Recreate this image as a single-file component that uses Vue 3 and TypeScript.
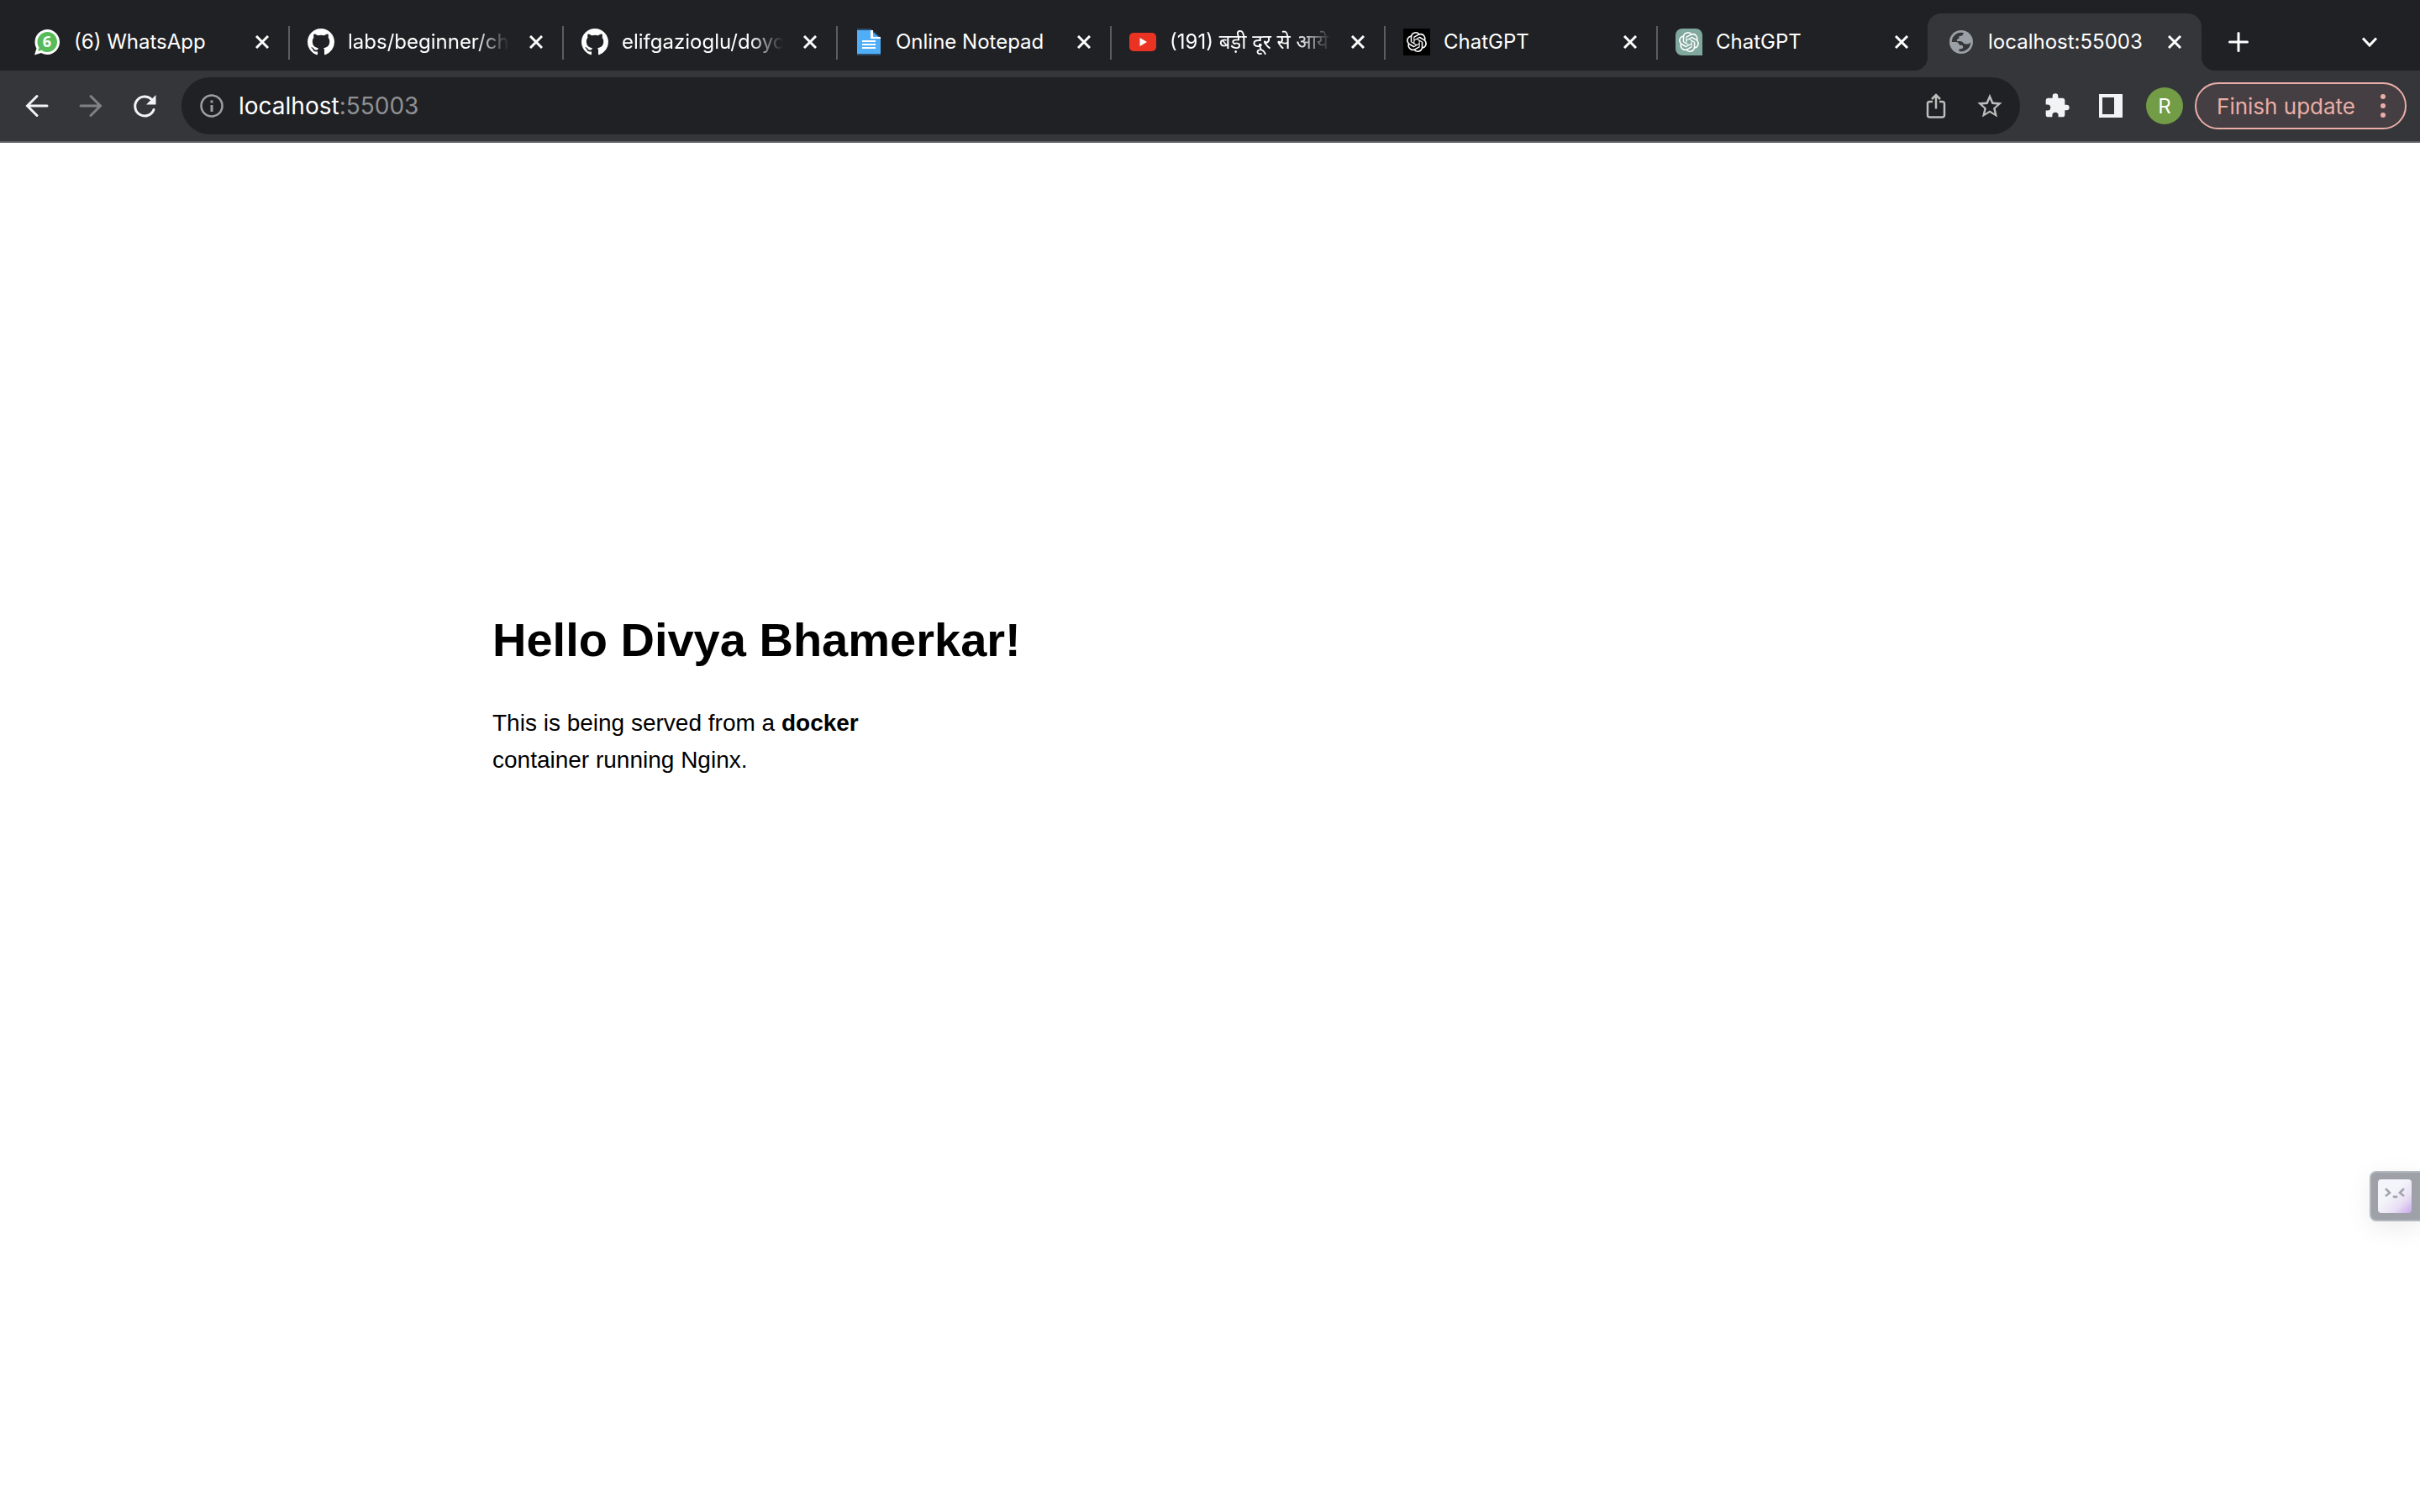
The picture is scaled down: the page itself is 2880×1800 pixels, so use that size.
<script setup lang="ts">
interface Tab {
  icon: 'whatsapp' | 'github' | 'notepad' | 'youtube' | 'gpt-dark' | 'gpt-green' | 'globe'
  title: string
  faded?: boolean
  active?: boolean
}

const tabs: Tab[] = [
  { icon: 'whatsapp', title: '(6) WhatsApp' },
  { icon: 'github', title: 'labs/beginner/ch', faded: true },
  { icon: 'github', title: 'elifgazioglu/doyo', faded: true },
  { icon: 'notepad', title: 'Online Notepad' },
  { icon: 'youtube', title: '(191) बड़ी दूर से आये', faded: true },
  { icon: 'gpt-dark', title: 'ChatGPT' },
  { icon: 'gpt-green', title: 'ChatGPT' },
  { icon: 'globe', title: 'localhost:55003', active: true },
]

const knot =
  'M22.28 9.82a5.98 5.98 0 0 0-.52-4.91 6.05 6.05 0 0 0-6.51-2.9A6.07 6.07 0 0 0 4.98 4.18a5.98 5.98 0 0 0-4 2.9 6.05 6.05 0 0 0 .74 7.1 5.98 5.98 0 0 0 .51 4.91 6.05 6.05 0 0 0 6.51 2.9A5.98 5.98 0 0 0 13.26 24a6.06 6.06 0 0 0 5.77-4.21 5.99 5.99 0 0 0 4-2.9 6.06 6.06 0 0 0-.75-7.07zm-9.02 12.61a4.48 4.48 0 0 1-2.88-1.04l.14-.08 4.78-2.76a.79.79 0 0 0 .39-.68v-6.74l2.02 1.17a.07.07 0 0 1 .04.05v5.58a4.5 4.5 0 0 1-4.49 4.5zm-9.66-4.13a4.47 4.47 0 0 1-.54-3.01l.14.09 4.78 2.76a.77.77 0 0 0 .78 0l5.84-3.37v2.33a.08.08 0 0 1-.03.06L9.74 19.95a4.5 4.5 0 0 1-6.14-1.65zM2.34 7.9a4.49 4.49 0 0 1 2.37-1.97v5.67a.77.77 0 0 0 .39.68l5.81 3.35-2.02 1.17a.08.08 0 0 1-.07 0l-4.83-2.79A4.5 4.5 0 0 1 2.34 7.87zm16.6 3.86-5.84-3.39L15.12 7.2a.08.08 0 0 1 .07 0l4.83 2.79a4.49 4.49 0 0 1-.68 8.1v-5.67a.79.79 0 0 0-.41-.67zm2.01-3.02-.14-.09-4.77-2.78a.78.78 0 0 0-.79 0L9.41 9.23V6.9a.07.07 0 0 1 .03-.06l4.83-2.79a4.5 4.5 0 0 1 6.68 4.66zM8.31 12.86l-2.02-1.16a.08.08 0 0 1-.04-.06V6.07a4.5 4.5 0 0 1 7.38-3.45l-.14.08L8.7 5.46a.79.79 0 0 0-.39.68zm1.1-2.37 2.6-1.5 2.61 1.5v3l-2.6 1.5-2.61-1.5z'
</script>

<template>
  <div class="browser">
    <header>
      <div class="strip">
        <div class="tabs" role="tablist">
          <div v-for="(tab, i) in tabs" :key="i" class="tab" :class="{ active: tab.active }" role="tab" :aria-selected="!!tab.active">
            <svg v-if="tab.icon === 'whatsapp'" class="fav" viewBox="0 0 32 32">
              <path fill="#fff" d="M16.500 1C8.500 1 1.500 7.500 1.500 16c0 3 .8 5.500 2 7.500L1 31.500l8-2.500c2.300 1.300 4.800 2 7.500 2C24.500 31 31 24 31 16S24.500 1 16.500 1z" />
              <path fill="#57bb5a" d="M16.500 4C10 4 4.500 9.300 4.500 16c0 2.500.7 4.800 2 6.800L5 27l4.500-1.300c2 1.400 4.400 2.300 7 2.300C23 28 28 22.500 28 16S23 4 16.500 4z" />
              <text x="16" y="22" text-anchor="middle" class="count">6</text>
            </svg>
            <svg v-else-if="tab.icon === 'github'" class="fav" viewBox="0 0 16 16">
              <path fill="#fff" d="M8 0C3.580 0 0 3.580 0 8c0 3.540 2.290 6.530 5.470 7.590.4.070.55-.17.55-.38 0-.19-.01-.82-.01-1.490-2.010.37-2.530-.49-2.690-.94-.09-.23-.48-.94-.82-1.130-.28-.15-.68-.52-.01-.53.63-.01 1.080.58 1.230.82.72 1.210 1.870.87 2.330.66.07-.52.28-.87.51-1.070-1.780-.2-3.640-.89-3.640-3.950 0-.87.31-1.590.82-2.150-.08-.2-.36-1.020.08-2.120 0 0 .67-.21 2.200.82.64-.18 1.320-.27 2-.27s1.360.09 2 .27c1.530-1.040 2.200-.82 2.200-.82.44 1.100.16 1.920.08 2.120.51.56.82 1.270.82 2.150 0 3.070-1.870 3.750-3.650 3.950.29.25.54.73.54 1.480 0 1.070-.01 1.930-.01 2.200 0 .21.15.46.55.38A8.010 8.010 0 0 0 16 8c0-4.420-3.580-8-8-8z" />
            </svg>
            <svg v-else-if="tab.icon === 'notepad'" class="fav" viewBox="0 0 32 32">
              <path fill="#2d4b66" d="M2 0h16l12 10v22H2z" />
              <path fill="#50aef8" d="M2 2h16l12 10v18H2z" />
              <path fill="#fff" d="M18 2v10h12v-2h-9V2z" />
              <path fill="#fff" d="M8 14h16v2H8zm0 4h16v2H8zm0 4h16v2H8z" />
            </svg>
            <svg v-else-if="tab.icon === 'youtube'" class="fav" viewBox="0 0 32 32">
              <rect y="5" width="32" height="22" rx="5" fill="#ea3323" />
              <path fill="#fff" d="m12.500 11 8.500 5-8.500 5z" />
            </svg>
            <svg v-else-if="tab.icon === 'gpt-dark'" class="fav" viewBox="0 0 32 32">
              <path d="M0 0h32v32H0z" />
              <path fill="#fff" transform="translate(4 4)" :d="knot" />
            </svg>
            <svg v-else-if="tab.icon === 'gpt-green'" class="fav" viewBox="0 0 32 32">
              <path fill="#80a89d" d="M8 0h16a8 8 0 0 1 8 8v24H8a8 8 0 0 1-8-8V8a8 8 0 0 1 8-8z" />
              <path fill="#fff" transform="translate(4 4)" :d="knot" />
            </svg>
            <svg v-else class="fav" viewBox="0 0 32 32">
              <circle cx="16" cy="16" r="14" fill="#9aa0a6" />
              <path fill="#35363a" d="M4.700 16A11.300 11.300 0 0 1 18.500 5c.3 2.800-1.500 4-5 4v1.500c0 1.500-.8 2-2.500 2.200V15c5.500-.3 6.500.5 8 2.500.8 1 2 1 4 1 2.300 0 3.600-1 4.300-2.500A11.300 11.300 0 0 1 13.500 27v-2.700h2c2.200 0 2.700-1.200 2.700-2.500 0-1.500-1.200-2-3-2-2.200 0-2-3.800-5-3.800z" />
            </svg>
            <span class="title" :class="{ faded: tab.faded }">{{ tab.title }}</span>
            <button class="close" aria-label="Close tab">
              <svg viewBox="0 0 16 16"><path d="m1 1 14 14M15 1 1 15" /></svg>
            </button>
          </div>
        </div>
        <button class="new" aria-label="New tab">
          <svg viewBox="0 0 24 24"><path d="M12 1.500v21M1.500 12h21" /></svg>
        </button>
        <button class="search" aria-label="Search tabs">
          <svg viewBox="0 0 20 12"><path d="m2 1.500 8 8.500 8-8.500" /></svg>
        </button>
      </div>
      <div class="toolbar">
        <button class="nav" aria-label="Back">
          <svg viewBox="0 0 32 32"><path d="M28 16H5M16 4.500 4.500 16 16 27.500" fill="none" stroke="#f1f3f4" stroke-width="3" stroke-linecap="round" /></svg>
        </button>
        <button class="nav" aria-label="Forward">
          <svg viewBox="0 0 32 32"><path d="M4 16h23M16 4.500 27.500 16 16 27.500" fill="none" stroke="#808184" stroke-width="3" stroke-linecap="round" /></svg>
        </button>
        <button class="nav" aria-label="Reload">
          <svg viewBox="0 0 32 32"><path d="M27 20.500A11.500 11.500 0 1 1 24.500 8.500" fill="none" stroke="#f1f3f4" stroke-width="3" stroke-linecap="round" /><path fill="#f1f3f4" d="M29.500 3v11.500H18z" /></svg>
        </button>
        <div class="omnibox">
          <button class="info" aria-label="View site information">
            <svg viewBox="0 0 28 28"><circle cx="14" cy="14" r="12.500" fill="none" stroke="#9aa0a6" stroke-width="2.500" /><path fill="#9aa0a6" d="M12.500 7.500h3v3h-3zm0 5.500h3v8h-3z" /></svg>
          </button>
          <span class="url">localhost<span class="port">:55003</span></span>
          <button class="act" aria-label="Share">
            <svg viewBox="0 0 32 32"><path d="M12 11H8.500a2.500 2.500 0 0 0-2.500 2.500V27a2.500 2.500 0 0 0 2.500 2.500h15A2.500 2.500 0 0 0 26 27V13.500a2.500 2.500 0 0 0-2.500-2.500H20M16 19.500V3M11 8l5-5 5 5" fill="none" stroke="#bdbdbd" stroke-width="2.500" /></svg>
          </button>
          <button class="act" aria-label="Bookmark">
            <svg viewBox="0 0 24 24"><path fill="#bdbdbd" d="m23 9.240-7.910-.68L12 1.300 8.910 8.570 1 9.240l6 5.200-1.800 7.730L12 18.070l6.800 4.100-1.790-7.730zM12 16.200l-4.130 2.490 1.100-4.700-3.650-3.160 4.810-.42L12 5.980l1.880 4.440 4.810.42-3.650 3.160 1.100 4.700z" /></svg>
          </button>
        </div>
        <button class="tool" aria-label="Extensions">
          <svg viewBox="0 0 24 24"><path fill="#f1f3f4" d="M20.500 11H19V7c0-1.100-.9-2-2-2h-4V3.500a2.500 2.500 0 0 0-5 0V5H4c-1.100 0-1.990.9-1.990 2v3.800H3.500a2.700 2.700 0 0 1 0 5.400H2V20c0 1.100.9 2 2 2h3.800v-1.500a2.700 2.700 0 0 1 5.400 0V22H17c1.100 0 2-.9 2-2v-4h1.500a2.500 2.500 0 0 0 0-5z" /></svg>
        </button>
        <button class="tool" aria-label="Side panel">
          <svg viewBox="0 0 32 32"><path fill="#f1f3f4" fill-rule="evenodd" d="M2 2h28v28H2zm4 4v20h14V6z" /></svg>
        </button>
        <button class="avatar" aria-label="Profile">R</button>
        <button class="update">
          <span>Finish update</span>
          <svg viewBox="0 0 6 30"><circle cx="3" cy="4" r="3" /><circle cx="3" cy="15" r="3" /><circle cx="3" cy="26" r="3" /></svg>
        </button>
      </div>
    </header>

    <main>
      <h1>Hello Divya Bhamerkar!</h1>
      <p>This is being served from a <b>docker</b> container running Nginx.</p>
    </main>

    <button class="widget" aria-label="Assistant">
      <svg viewBox="0 0 40 40">
        <defs>
          <linearGradient id="face" x1="0.4" y1="0.4" x2="1" y2="1">
            <stop offset="0" stop-color="#f4f5fa" />
            <stop offset="0.5" stop-color="#e9e0f4" />
            <stop offset="1" stop-color="#c9a8ea" />
          </linearGradient>
        </defs>
        <rect width="40" height="40" rx="4" fill="url(#face)" />
        <path d="m9 11 5 5-5 4M31 11l-5 5 5 4M18 20q2.500 2 5 0" fill="none" stroke="#a2a4ae" stroke-width="2.500" />
      </svg>
    </button>
  </div>
</template>

<style>
body {
  background: #fff;
}
</style>

<style scoped>
.browser {
  min-height: 100vh;
  font-family: Inter, "Noto Sans", sans-serif;
}
button {
  display: flex;
  align-items: center;
  justify-content: center;
  flex: none;
  padding: 0;
  border: 0;
  background: none;
  font-family: inherit;
}
svg {
  display: block;
}
.strip {
  display: flex;
  height: 84px;
  padding: 16px 36px 0 17px;
  box-sizing: border-box;
  background: #202124;
}
.tabs {
  flex: 1;
  min-width: 0;
  display: grid;
  grid-template-columns: repeat(5, 326fr) 324fr 323fr 326fr;
}
.tab {
  position: relative;
  display: flex;
  align-items: center;
  min-width: 0;
  padding: 0 19px 0 23px;
}
.tab:not(:first-child, .active)::before {
  content: "";
  position: absolute;
  left: 0;
  top: 15px;
  width: 2px;
  height: 40px;
  background: #5c5d60;
}
.tab.active {
  padding: 0 20px 0 24px;
  border-radius: 16px 16px 0 0;
  background: #35363a;
}
.tab.active::before,
.tab.active::after {
  content: "";
  position: absolute;
  bottom: 0;
  width: 16px;
  height: 16px;
}
.tab.active::before {
  right: 100%;
  background: radial-gradient(circle at 0 0, #202124 16px, #35363a 16px);
}
.tab.active::after {
  left: 100%;
  background: radial-gradient(circle at 100% 0, #202124 16px, #35363a 16px);
}
.fav {
  flex: none;
  width: 32px;
  height: 32px;
}
.count {
  font: bold 18px "Open Sans", sans-serif;
  fill: #fff;
}
.title {
  flex: 1;
  min-width: 0;
  margin: 0 20px 0 16px;
  white-space: nowrap;
  color: #fff;
  font-size: 24px;
  line-height: 40px;
}
.title.faded {
  mask-image: linear-gradient(to right, #000 calc(100% - 40px), transparent);
}
.close {
  width: 24px;
  height: 24px;
}
.close svg {
  width: 16px;
  height: 16px;
  fill: none;
  stroke: #fff;
  stroke-width: 3;
}
.new {
  width: 88px;
}
.new svg {
  width: 24px;
  height: 24px;
  stroke: #fff;
  stroke-width: 3;
  stroke-linecap: round;
}
.search {
  width: 48px;
  margin-left: 88px;
}
.search svg {
  width: 20px;
  height: 12px;
  fill: none;
  stroke: #fff;
  stroke-width: 3;
}
.toolbar {
  display: flex;
  align-items: center;
  padding: 8px 16px 8px 12px;
  border-bottom: 2px solid #5f5f65;
  background: #35363a;
}
.nav {
  width: 64px;
  height: 64px;
}
.nav svg,
.act svg,
.tool svg {
  width: 32px;
  height: 32px;
}
.omnibox {
  display: flex;
  align-items: center;
  flex: 1;
  height: 68px;
  margin: 0 12px;
  padding: 0 4px 0 22px;
  box-sizing: border-box;
  border-radius: 34px;
  background: #202124;
}
.info svg {
  width: 28px;
  height: 28px;
}
.url {
  flex: 1;
  margin-left: 18px;
  color: #fff;
  font-size: 28px;
  line-height: 40px;
}
.port {
  color: #8f9093;
}
.act,
.tool {
  width: 64px;
  height: 64px;
}
.avatar {
  width: 44px;
  height: 44px;
  margin: 0 14px 0 10px;
  border-radius: 50%;
  background: #739c46;
  color: #fff;
  font-size: 24px;
}
.update {
  gap: 30px;
  height: 56px;
  padding: 0 23px 0 24px;
  border: 2px solid #eaaea8;
  border-radius: 28px;
  background: #453e42;
  color: #eaaea8;
  font-size: 26px;
}
.update svg {
  width: 6px;
  height: 30px;
  fill: #eaaea8;
}
main {
  box-sizing: border-box;
  width: 50%;
  padding: 550px 0 60px 586px;
  color: #000;
  font: 28px/44px "Liberation Sans", sans-serif;
}
h1 {
  margin: 0;
  font-size: 56px;
  line-height: 84px;
}
p {
  max-width: 460px;
  margin: 35px 0 0;
}
.widget {
  position: fixed;
  right: -2px;
  top: 1394px;
  width: 62px;
  height: 60px;
  justify-content: flex-start;
  padding-left: 8px;
  border: 2px solid #b2b7be;
  border-radius: 8px 0 0 8px;
  background: #9fa1a9;
  box-shadow: 0 8px 30px rgba(0, 0, 0, 0.08);
}
.widget svg {
  width: 40px;
  height: 40px;
}
</style>
